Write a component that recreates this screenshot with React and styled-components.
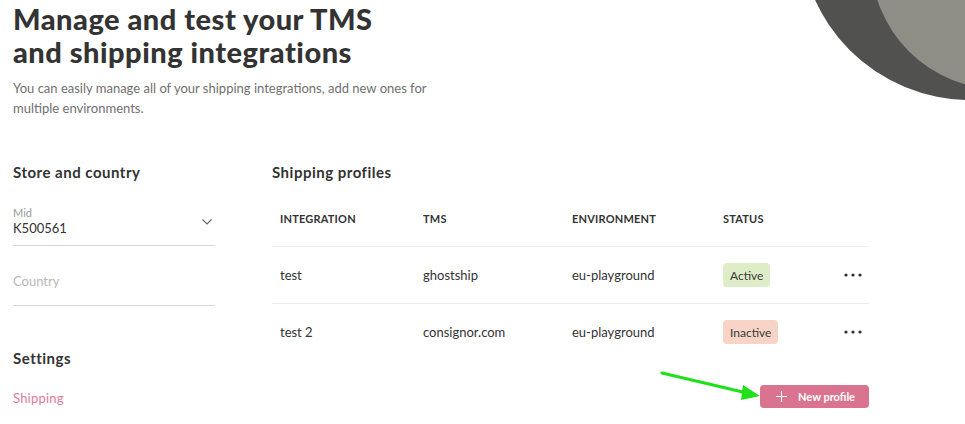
import React from 'react';
import styled, { createGlobalStyle } from 'styled-components';

const GlobalStyle = createGlobalStyle`
  html, body {
    margin: 0;
    padding: 0;
    background: #ffffff;
  }
  body {
    font-family: 'Lato', 'Noto Sans', sans-serif;
    color: #333333;
    -webkit-font-smoothing: antialiased;
  }
`;

const Page = styled.div`
  position: relative;
  width: 965px;
  height: 424px;
  overflow: hidden;
  padding: 2px 0 0 13px;
  box-sizing: border-box;
`;

const Decor = styled.svg`
  position: absolute;
  top: 0;
  right: 0;
`;

const Arrow = styled.svg`
  position: absolute;
  left: 655px;
  top: 365px;
  pointer-events: none;
`;

const Title = styled.h1`
  margin: 0;
  font-family: 'Lato', sans-serif;
  font-weight: 900;
  font-size: 29px;
  line-height: 33px;
  color: #333333;
  letter-spacing: 0.5px;
`;

const Lead = styled.p`
  margin: 10px 0 0;
  width: 440px;
  font-size: 13px;
  line-height: 20px;
  color: #707070;
`;

const Main = styled.div`
  display: grid;
  grid-template-columns: 202px 597px;
  column-gap: 57px;
  margin-top: 44px;
`;

const Aside = styled.div`
  display: flex;
  flex-direction: column;
`;

const SectionTitle = styled.h2`
  margin: ${p => p.$top || 0}px 0 0;
  font-size: 15px;
  line-height: 20px;
  font-weight: 700;
  letter-spacing: 0.5px;
  color: #333333;
`;

const Field = styled.div`
  display: flex;
  align-items: center;
  justify-content: space-between;
  padding: ${p => p.$pad};
  border-bottom: 1px solid #d6d6d6;
`;

const FieldText = styled.div`
  display: flex;
  flex-direction: column;
`;

const FieldLabel = styled.span`
  font-size: 11px;
  line-height: 14px;
  color: #9a9a9a;
`;

const FieldValue = styled.span`
  font-size: 13px;
  line-height: 16px;
  color: ${p => (p.$placeholder ? '#b8b8b8' : '#333333')};
`;

const Chevron = styled.svg`
  margin-right: 3px;
  margin-top: 2px;
`;

const NavLink = styled.a`
  margin-top: 22px;
  font-size: 13px;
  line-height: 16px;
  letter-spacing: 0.2px;
  color: #de7a98;
  text-decoration: none;
`;

const Content = styled.div`
  display: flex;
  flex-direction: column;
`;

const Table = styled.div`
  margin-top: 8px;
  display: grid;
  grid-template-columns: 143px 149px 151px 1fr 40px;
`;

const Cell = styled.div`
  display: flex;
  align-items: center;
  justify-content: ${p => (p.$end ? 'flex-end' : 'flex-start')};
  height: 56px;
  padding: ${p => (p.$end ? '0 7px 0 0' : '0 0 0 8px')};
  border-bottom: ${p => (p.$last ? 'none' : '1px solid #eeeeee')};
  font-size: ${p => (p.$head ? '11px' : '13px')};
  font-weight: ${p => (p.$head ? 700 : 400)};
  letter-spacing: ${p => (p.$head ? '0.2px' : '0')};
  color: #333333;
`;

const Badge = styled.span`
  display: inline-flex;
  align-items: center;
  height: 24px;
  padding: 0 7px;
  border-radius: 4px;
  font-size: 12px;
  color: #3a3a3a;
  background: ${p => (p.$active ? '#deedc8' : '#f8d4c7')};
`;

const Actions = styled.div`
  display: flex;
  justify-content: flex-end;
  margin-top: 25px;
`;

const PrimaryButton = styled.button`
  display: inline-flex;
  align-items: center;
  gap: 11px;
  height: 23px;
  padding: 0 14px 0 16px;
  border: none;
  border-radius: 4px;
  background: #d9738f;
  color: #ffffff;
  font-family: inherit;
  font-size: 11px;
  font-weight: 700;
  cursor: pointer;
`;

const Dots = () => (
  <svg width="18" height="4" viewBox="0 0 18 4">
    <circle cx="2" cy="2" r="1.6" fill="#2e2e2e" />
    <circle cx="9" cy="2" r="1.6" fill="#2e2e2e" />
    <circle cx="16" cy="2" r="1.6" fill="#2e2e2e" />
  </svg>
);

const profiles = [
  { name: 'test', tms: 'ghostship', env: 'eu-playground', active: true },
  { name: 'test 2', tms: 'consignor.com', env: 'eu-playground', active: false },
];

export default function App() {
  return (
    <Page>
      <GlobalStyle />
      <Decor width="160" height="110" viewBox="805 0 160 110">
        <circle cx="970" cy="-70" r="170" fill="#515250" />
        <circle cx="1000" cy="-40" r="129" fill="#8e8e87" />
      </Decor>

      <Title>
        Manage and test your TMS
        <br />
        and shipping integrations
      </Title>
      <Lead>
        You can easily manage all of your shipping integrations, add new ones for multiple environments.
      </Lead>

      <Main>
        <Aside>
          <SectionTitle>Store and country</SectionTitle>
          <Field $pad="24px 0 9px">
            <FieldText>
              <FieldLabel>Mid</FieldLabel>
              <FieldValue>K500561</FieldValue>
            </FieldText>
            <Chevron width="10" height="6" viewBox="0 0 10 6">
              <path d="M0.5 0.5l4.5 4.5 4.5-4.5" fill="none" stroke="#666" strokeWidth="1.1" />
            </Chevron>
          </Field>
          <Field $pad="27px 0 16px">
            <FieldValue $placeholder>Country</FieldValue>
          </Field>
          <SectionTitle $top={42}>Settings</SectionTitle>
          <NavLink href="#">Shipping</NavLink>
        </Aside>

        <Content>
          <SectionTitle>Shipping profiles</SectionTitle>
          <Table>
            <Cell $head>INTEGRATION</Cell>
            <Cell $head>TMS</Cell>
            <Cell $head>ENVIRONMENT</Cell>
            <Cell $head>STATUS</Cell>
            <Cell $head />
            {profiles.map((p, i) => {
              const last = i === profiles.length - 1;
              return (
                <React.Fragment key={p.name}>
                  <Cell $last={last}>{p.name}</Cell>
                  <Cell $last={last}>{p.tms}</Cell>
                  <Cell $last={last}>{p.env}</Cell>
                  <Cell $last={last}>
                    <Badge $active={p.active}>{p.active ? 'Active' : 'Inactive'}</Badge>
                  </Cell>
                  <Cell $last={last} $end>
                    <Dots />
                  </Cell>
                </React.Fragment>
              );
            })}
          </Table>
          <Actions>
            <PrimaryButton>
              <svg width="11" height="11" viewBox="0 0 11 11">
                <path d="M5.5 0v11M0 5.5h11" stroke="#fff" strokeWidth="1.2" />
              </svg>
              New profile
            </PrimaryButton>
          </Actions>
        </Content>
      </Main>

      <Arrow width="110" height="40" viewBox="0 0 110 40">
        <path d="M7 8 L92 28" stroke="#1fe01a" strokeWidth="3" strokeLinecap="round" />
        <path d="M105 31 L88 20 L86 35 Z" fill="#1fe01a" />
      </Arrow>
    </Page>
  );
}
